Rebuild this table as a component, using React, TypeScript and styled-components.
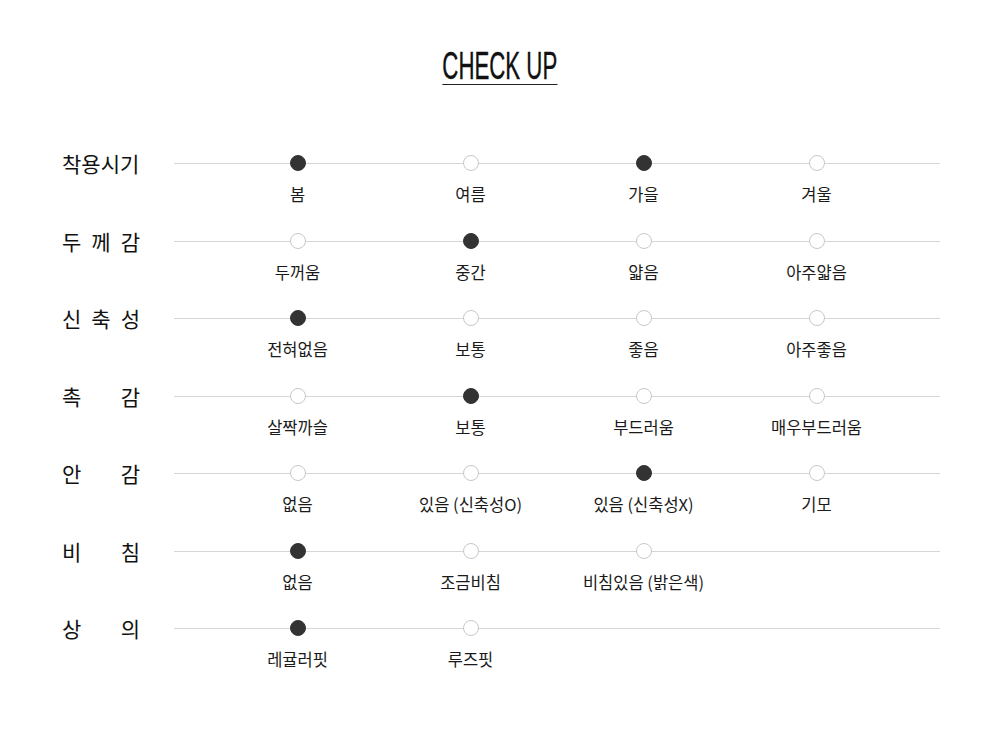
import React from "react";
import styled, { createGlobalStyle } from "styled-components";

const GlobalStyle = createGlobalStyle`
  html, body {
    margin: 0;
    padding: 0;
    background: #fff;
  }
  body {
    font-family: "Noto Sans CJK KR", "Noto Sans", sans-serif;
    color: #222;
  }
`;

const Page = styled.div`
  width: 1000px;
  padding-top: 47px;
  display: flex;
  flex-direction: column;
  align-items: center;
`;

const TitleWrap = styled.div`
  display: flex;
  justify-content: center;
  margin-bottom: 70px;
`;

const Title = styled.h2`
  margin: 0;
  font-family: "Liberation Sans", sans-serif;
  font-weight: 400;
  font-size: 39px;
  line-height: 37px;
  color: #111;
  border-bottom: 1.5px solid #222;
  transform: scaleX(0.57);
  -webkit-text-stroke: 0.4px #111;
  white-space: nowrap;
`;

const Table = styled.div`
  width: 1000px;
  display: flex;
  flex-direction: column;
`;

const Row = styled.div`
  display: grid;
  grid-template-columns: 78px 766px;
  column-gap: 34px;
  padding-left: 62px;
  height: 77.5px;
`;

const Label = styled.div`
  font-size: 21px;
  line-height: 16px;
  height: 16px;
  text-align: justify;
  text-align-last: justify;
  color: #111;
  white-space: nowrap;
`;

const Track = styled.div`
  position: relative;
  display: grid;
  grid-template-columns: repeat(4, 173px);
  padding: 0 37px;
  align-items: start;

  &::before {
    content: "";
    position: absolute;
    left: 0;
    right: 0;
    top: 8px;
    height: 1px;
    background: #d6d6d6;
  }
`;

const Option = styled.div`
  position: relative;
  display: flex;
  flex-direction: column;
  align-items: center;
`;

const Dot = styled.span<{ $on: boolean }>`
  display: block;
  box-sizing: border-box;
  width: 16px;
  height: 16px;
  border-radius: 50%;
  background: ${(p) => (p.$on ? "#333" : "#fff")};
  border: 1px solid ${(p) => (p.$on ? "#333" : "#c8c8c8")};
`;

const OptionText = styled.span`
  margin-top: 13px;
  font-size: 16.5px;
  line-height: 20px;
  color: #1a1a1a;
  white-space: nowrap;
`;

type Item = { label: string; options: string[]; selected: number[] };

const items: Item[] = [
  { label: "착용시기", options: ["봄", "여름", "가을", "겨울"], selected: [0, 2] },
  { label: "두 께 감", options: ["두꺼움", "중간", "얇음", "아주얇음"], selected: [1] },
  { label: "신 축 성", options: ["전혀없음", "보통", "좋음", "아주좋음"], selected: [0] },
  { label: "촉 감", options: ["살짝까슬", "보통", "부드러움", "매우부드러움"], selected: [1] },
  { label: "안 감", options: ["없음", "있음 (신축성O)", "있음 (신축성X)", "기모"], selected: [2] },
  { label: "비 침", options: ["없음", "조금비침", "비침있음 (밝은색)"], selected: [0] },
  { label: "상 의", options: ["레귤러핏", "루즈핏"], selected: [0] },
];

const App = (): JSX.Element => {
  return (
    <>
      <GlobalStyle />
      <Page>
        <TitleWrap>
          <Title>CHECK UP</Title>
        </TitleWrap>
        <Table>
          {items.map((item) => (
            <Row key={item.label}>
              <Label>{item.label}</Label>
              <Track>
                {item.options.map((opt, i) => (
                  <Option key={opt + i}>
                    <Dot $on={item.selected.includes(i)} />
                    <OptionText>{opt}</OptionText>
                  </Option>
                ))}
              </Track>
            </Row>
          ))}
        </Table>
      </Page>
    </>
  );
};

export default App;
